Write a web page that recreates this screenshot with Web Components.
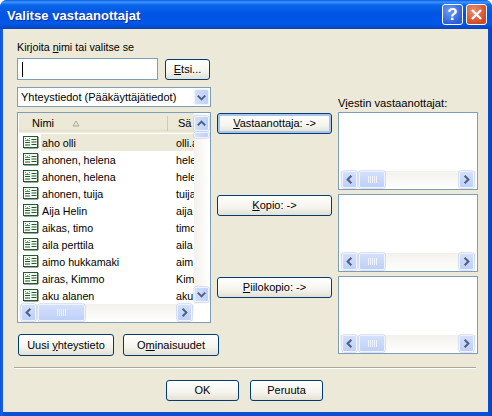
<!DOCTYPE html>
<html>
<head>
<meta charset="utf-8">
<title>Valitse vastaanottajat</title>
<style>
  html, body { margin: 0; padding: 0; background: #fff; }
  body { width: 492px; height: 416px; overflow: hidden; font: 11px/13px "Liberation Sans", sans-serif; color: #000; }
</style>
</head>
<body>
<xp-dialog heading="Valitse vastaanottajat">
  <picker-pane></picker-pane>
  <xp-button slot="footer" wide>OK</xp-button>
  <xp-button slot="footer" wide>Peruuta</xp-button>
</xp-dialog>

<script>
const FONT = `"Liberation Sans", sans-serif`

const chevron = (dir) => {
  const pts = { up: '3,9 7,5 11,9', down: '3,5 7,9 11,5', left: '9,3 5,7 9,11', right: '5,3 9,7 5,11' }
  return `<svg width="13" height="13" viewBox="0 0 14 14"><polyline points="${pts[dir]}" fill="none" stroke="#4d6185" stroke-width="2.2"/></svg>`
}

class XpDialog extends HTMLElement {
  connectedCallback() {
    const root = this.attachShadow({ mode: 'open' })
    root.innerHTML = `
<style>
  :host {
    display: flex;
    flex-direction: column;
    width: 492px;
    height: 416px;
    box-sizing: border-box;
    border-radius: 7px 7px 0 0;
    overflow: hidden;
    background: linear-gradient(90deg, #0a50d8 0, #1767ea 2px, #0a4fd6 3px, #0a4fd6 488px, #0a3fb8 492px);
    font-family: ${FONT};
    font-size: 11px;
  }
  header {
    flex: none;
    height: 29px;
    display: flex;
    align-items: center;
    padding: 0 5px 0 7px;
    background: linear-gradient(#0a5ae0 0, #3d95ff 2px, #0a66ea 5px, #0054e3 14px, #0057e8 24px, #0a44b8 29px);
  }
  h1 {
    flex: 1;
    margin: 0;
    padding-top: 2px;
    color: #fff;
    font: bold 13px/16px "Liberation Sans", sans-serif;
    letter-spacing: .05px;
    text-shadow: 1px 1px 0 #0f2f9a;
  }
  .cap {
    width: 21px;
    height: 21px;
    margin-left: 3px;
    box-sizing: border-box;
    border: 1px solid #fff;
    border-radius: 3px;
    color: #fff;
    display: flex;
    align-items: center;
    justify-content: center;
  }
  .help { background: radial-gradient(circle at 35% 30%, #6f9cf5, #2a5ed8 75%); font: bold 17px/19px "Liberation Sans", sans-serif; }
  .close { background: radial-gradient(circle at 35% 30%, #ec8d70, #d24a22 75%); }
  main {
    flex: 1;
    margin: 0 4px 4px 3px;
    background: #ece9d8;
    display: flex;
    flex-direction: column;
    min-height: 0;
  }
  .content { flex: none; height: 338px; }
  hr {
    flex: none;
    margin: 0 12px 0 11px;
    height: 2px;
    border: 0;
    background: linear-gradient(#aca899 1px, #fff 1px);
  }
  footer {
    display: flex;
    justify-content: center;
    gap: 11px;
    padding: 11px 2px 0 0;
  }
</style>
<header>
  <h1>${this.getAttribute('heading')}</h1>
  <div class="cap help">?</div>
  <div class="cap close"><svg width="13" height="13" viewBox="0 0 13 13"><path d="M2 2l9 9M11 2l-9 9" stroke="#fff" stroke-width="2.4"/></svg></div>
</header>
<main>
  <div class="content"><slot></slot></div>
  <hr>
  <footer><slot name="footer"></slot></footer>
</main>`
  }
}

class XpButton extends HTMLElement {
  connectedCallback() {
    const root = this.attachShadow({ mode: 'open' })
    root.innerHTML = `
<style>
  :host {
    display: block;
    box-sizing: border-box;
    height: 21px;
    border: 1px solid #003c74;
    border-radius: 3px;
    background: linear-gradient(#fff, #f5f4ee 60%, #e3e0d2);
    text-align: center;
    font-size: 11px;
    line-height: 19px;
    white-space: nowrap;
    color: #000;
  }
  :host([wide]) { width: 73px; }
  :host([focused]) { box-shadow: inset 0 0 0 2px #a9c4ec; }
</style>
<slot></slot>`
  }
}

class XpScrollbar extends HTMLElement {
  connectedCallback() {
    const root = this.attachShadow({ mode: 'open' })
    const vertical = this.hasAttribute('vertical')
    const thumb = this.getAttribute('thumb') || 8
    const grip = vertical ? '' : `<svg width="9" height="7"><path d="M.5 0v7M2.5 0v7M4.5 0v7M6.5 0v7M8.5 0v7" stroke="#eef3fe"/></svg>`
    root.innerHTML = `
<style>
  :host {
    display: flex;
    flex-direction: ${vertical ? 'column' : 'row'};
    ${vertical ? 'width: 15px;' : 'height: 17px;'}
    background: ${vertical ? 'linear-gradient(90deg, #f3f1ec, #fff)' : 'linear-gradient(#f3f1ec, #fefefd)'};
    align-items: stretch;
    padding: ${vertical ? '2px 0' : '0 2px'};
    box-sizing: border-box;
  }
  .arrow, .thumb {
    box-sizing: border-box;
    border: 1px solid #eef3fe;
    border-radius: 2px;
    background: linear-gradient(${vertical ? '90deg, ' : ''}#d3e0fb, #bfd0f8);
    box-shadow: 0 0 0 .5px #b4c5ee;
    display: flex;
    align-items: center;
    justify-content: center;
  }
  .arrow { flex: none; ${vertical ? 'height: 15px;' : 'width: 15px;'} }
  .thumb { flex: none; ${vertical ? `height: ${thumb}px; margin-top: 1px;` : `width: ${thumb}px; margin-left: 2px;`} }
  .rest { flex: 1; }
</style>
<div class="arrow">${chevron(vertical ? 'up' : 'left')}</div>
<div class="thumb">${grip}</div>
<div class="rest"></div>
<div class="arrow">${chevron(vertical ? 'down' : 'right')}</div>`
  }
}

class RecipientBox extends HTMLElement {
  connectedCallback() {
    const root = this.attachShadow({ mode: 'open' })
    root.innerHTML = `
<style>
  :host {
    display: flex;
    flex-direction: column;
    box-sizing: border-box;
    width: 140px;
    height: 78px;
    border: 1px solid #7f9db9;
    background: #fff;
  }
  .blank { flex: 1; }
  xp-scrollbar { margin: 0 1px 1px; }
</style>
<div class="blank"></div>
<xp-scrollbar thumb="26"></xp-scrollbar>`
  }
}

class ContactRow extends HTMLElement {
  connectedCallback() {
    const root = this.attachShadow({ mode: 'open' })
    root.innerHTML = `
<style>
  :host {
    display: flex;
    align-items: center;
    height: 17px;
    white-space: nowrap;
    overflow: hidden;
    font-size: 10.7px;
  }
  svg { flex: none; margin: 0 2px 0 4px; }
  .name { flex: none; width: 135px; padding: 2px 0 0 1px; box-sizing: border-box; height: 17px; line-height: 15px; }
  .mail { flex: none; padding-top: 2px; }
  :host([selected]) .name, :host([selected]) .mail { background: #ece9d8; }
  :host([selected]) .mail { flex: 1; height: 15px; line-height: 15px; }
</style>
<svg width="16" height="13" viewBox="0 0 16 13">
  <rect x=".5" y=".5" width="14" height="11" fill="#f4fbf2" stroke="#24592f"/>
  <path d="M2 2.5h1M4 3.5h1M6 2.5h1M2 4.5h5" stroke="#3fa04a"/>
  <path d="M2 6.5h5M2 9h5M8.5 3.5h5M8.5 6h5M8.5 8.5h5" stroke="#24592f"/>
  <path d="M1 12.5h14M15.5 1v11" stroke="#9aa79a"/>
</svg>
<span class="name">${this.getAttribute('name')}</span>
<span class="mail">${this.getAttribute('mail')}</span>`
  }
}

const CONTACTS = [
  ['aho olli', 'olli.a'],
  ['ahonen, helena', 'hele'],
  ['ahonen, helena', 'hele'],
  ['ahonen, tuija', 'tuija'],
  ['Aija Helin', 'aija'],
  ['aikas, timo', 'timo'],
  ['aila perttila', 'aila'],
  ['aimo hukkamaki', 'aim'],
  ['airas, Kimmo', 'Kim'],
  ['aku alanen', 'aku']
]

class ContactList extends HTMLElement {
  connectedCallback() {
    const root = this.attachShadow({ mode: 'open' })
    root.innerHTML = `
<style>
  :host {
    display: grid;
    grid-template-columns: 175px 15px;
    grid-template-rows: 191px 17px;
    box-sizing: border-box;
    width: 194px;
    height: 211px;
    border: 1px solid #7f9db9;
    background: #fff;
    padding: 0 1px 1px;
  }
  .body { overflow: hidden; }
  .head {
    display: flex;
    align-items: center;
    height: 20px;
    margin-bottom: 1px;
    background: linear-gradient(#ece9d8, #ebe8d6 80%, #e2dfc9 90%, #f4f2e8);
    font-size: 11px;
    line-height: 15px;
  }
  .nimi { width: 149px; box-sizing: border-box; padding: 1px 0 0 13px; display: flex; align-items: center; gap: 18px; border-right: 1px solid #cfccb8; height: 15px; }
  .sa { padding: 1px 0 0 10px; }
  xp-scrollbar[vertical] { grid-row: 1; grid-column: 2; margin-top: 1px; }
  xp-scrollbar.h { grid-column: 1; grid-row: 2; }
</style>
<div class="body">
  <div class="head">
    <div class="nimi">Nimi <svg width="8" height="7"><path d="M1 6h6L4 1z" fill="none" stroke="#aca899"/></svg></div>
    <div class="sa">Sä</div>
  </div>
  ${CONTACTS.map((c, i) => `<contact-row name="${c[0]}" mail="${c[1]}"${i ? '' : ' selected'}></contact-row>`).join('')}
</div>
<xp-scrollbar vertical thumb="6"></xp-scrollbar>
<xp-scrollbar class="h" thumb="47"></xp-scrollbar>`
  }
}

class PickerPane extends HTMLElement {
  connectedCallback() {
    const root = this.attachShadow({ mode: 'open' })
    root.innerHTML = `
<style>
  :host {
    display: grid;
    grid-template-columns: 194px 115px 140px;
    column-gap: 6px;
    padding: 0 0 0 14px;
    height: 338px;
  }
  .left { display: flex; flex-direction: column; padding-top: 12px; }
  .hint { height: 17px; line-height: 13px; font-size: 10.7px; }
  .search { display: flex; gap: 7px; height: 22px; align-items: flex-start; }
  .input {
    width: 141px;
    height: 22px;
    box-sizing: border-box;
    border: 1px solid #7f9db9;
    background: #fff;
    padding: 3px 0 0 4px;
  }
  .caret { width: 1px; height: 15px; background: #000; }
  .search xp-button { width: 45px; margin-top: 1px; }
  .combo {
    margin-top: 7px;
    height: 20px;
    box-sizing: border-box;
    border: 1px solid #7f9db9;
    background: #fff;
    display: flex;
    align-items: center;
    justify-content: space-between;
    padding: 0 1px 0 3px;
    font-size: 11px;
  }
  .drop {
    width: 15px;
    height: 16px;
    box-sizing: border-box;
    border: 1px solid #eef3fe;
    border-radius: 2px;
    background: linear-gradient(90deg, #d3e0fb, #bfd0f8);
    display: flex;
    align-items: center;
    justify-content: center;
  }
  contact-list { margin-top: 5px; }
  .actions { display: flex; gap: 9px; margin: 11px 0 0 1px; }
  .actions xp-button { flex: none; width: 96px; height: 22px; line-height: 20px; }
  .middle { display: flex; flex-direction: column; padding-top: 84px; gap: 61px; }
  .right { display: flex; flex-direction: column; gap: 4px; padding-top: 68px; }
  .right .title { height: 12px; margin-bottom: -1px; line-height: 12px; white-space: nowrap; font-size: 11.2px; }
  u { text-underline-offset: 1px; }
</style>
<div class="left">
  <div class="hint">Kirjoita <u>n</u>imi tai valitse se</div>
  <div class="search">
    <div class="input"><div class="caret"></div></div>
    <xp-button><u>E</u>tsi...</xp-button>
  </div>
  <div class="combo"><span>Yhteystiedot (Pääkäyttäjätiedot)</span><div class="drop">${chevron('down')}</div></div>
  <contact-list></contact-list>
  <div class="actions">
    <xp-button>Uusi <u>y</u>hteystieto</xp-button>
    <xp-button>O<u>m</u>inaisuudet</xp-button>
  </div>
</div>
<div class="middle">
  <xp-button focused><u>V</u>astaanottaja: -&gt;</xp-button>
  <xp-button><u>K</u>opio: -&gt;</xp-button>
  <xp-button><u>P</u>iilokopio: -&gt;</xp-button>
</div>
<div class="right">
  <div class="title">V<u>i</u>estin vastaanottajat:</div>
  <recipient-box></recipient-box>
  <recipient-box></recipient-box>
  <recipient-box></recipient-box>
</div>`
  }
}

customElements.define('xp-button', XpButton)
customElements.define('xp-scrollbar', XpScrollbar)
customElements.define('recipient-box', RecipientBox)
customElements.define('contact-row', ContactRow)
customElements.define('contact-list', ContactList)
customElements.define('picker-pane', PickerPane)
customElements.define('xp-dialog', XpDialog)
</script>
</body>
</html>
